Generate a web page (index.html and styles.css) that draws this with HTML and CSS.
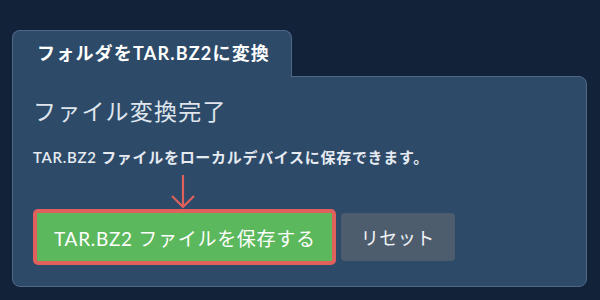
FILE: index.html
```html
<!DOCTYPE html>
<html lang="ja">
<head>
    <meta charset="UTF-8">
    <title>フォルダをTAR.BZ2に変換</title>
    <link rel="stylesheet" href="styles.css">
</head>
<body>
    <div class="converter">
        <div class="tab">フォルダをTAR.BZ2に変換</div>
        <div class="panel">
            <h2 class="title">ファイル変換完了</h2>
            <p class="desc">TAR.BZ2 ファイルをローカルデバイスに保存できます。</p>
            <div class="actions">
                <button class="btn btn-save">
                    TAR.BZ2 ファイルを保存する
                    <svg class="pointer" width="26" height="36" viewBox="0 0 26 36">
                        <path d="M13 1 V33 M2 22 L13 33 L24 22" fill="none" stroke="#e0605c" stroke-width="2.2"/>
                    </svg>
                </button>
                <button class="btn btn-reset">リセット</button>
            </div>
        </div>
    </div>
</body>
</html>
```

FILE: styles.css
```css
* {
    margin: 0;
    padding: 0;
    box-sizing: border-box;
}

body {
    font-family: Lato, "Noto Sans CJK JP", sans-serif;
    background: #112239;
    color: #ffffff;
    padding: 30px 13px 0 12px;
    height: 300px;
    overflow: hidden;
}

/* Tab on top of the panel */
.tab {
    display: inline-block;
    position: relative;
    z-index: 1;
    height: 47px;
    margin-bottom: -1px;
    padding: 0 21px 0 24px;
    line-height: 45px;
    font-size: 18px;
    font-weight: 700;
    letter-spacing: 1.2px;
    background: #2d4a69;
    border: 1px solid #4f6887;
    border-bottom: none;
    border-radius: 8px 8px 0 0;
}

.panel {
    background: #2d4a69;
    border: 1px solid #4f6887;
    border-radius: 0 8px 8px 8px;
    padding: 19px 20px 21px 20px;
}

.title {
    font-size: 23px;
    font-weight: 400;
    line-height: 30px;
    letter-spacing: 1.2px;
    color: #dfe5ec;
}

.desc {
    margin-top: 21px;
    font-size: 15px;
    font-weight: 600;
    line-height: 20px;
    letter-spacing: 0.7px;
    color: #e6ebf1;
}

.actions {
    display: flex;
    align-items: center;
    gap: 5px;
    margin-top: 42px;
}

.btn {
    font-family: inherit;
    font-size: 18px;
    color: #ffffff;
    border: none;
    border-radius: 4px;
    height: 48px;
    cursor: pointer;
}

.btn-save {
    position: relative;
    height: 56px;
    padding: 0 16px 0 17px;
    font-size: 19px;
    letter-spacing: 0.7px;
    background: #5cb85c;
    border: 4px solid #e0605c;
    border-radius: 5px;
}

.pointer {
    position: absolute;
    left: 50%;
    bottom: 100%;
    margin-left: -14px;
    margin-bottom: 3px;
}

.btn-reset {
    padding: 0 20px;
    letter-spacing: 0.5px;
    background: #4e5d6e;
    color: #f2f4f6;
}
```
